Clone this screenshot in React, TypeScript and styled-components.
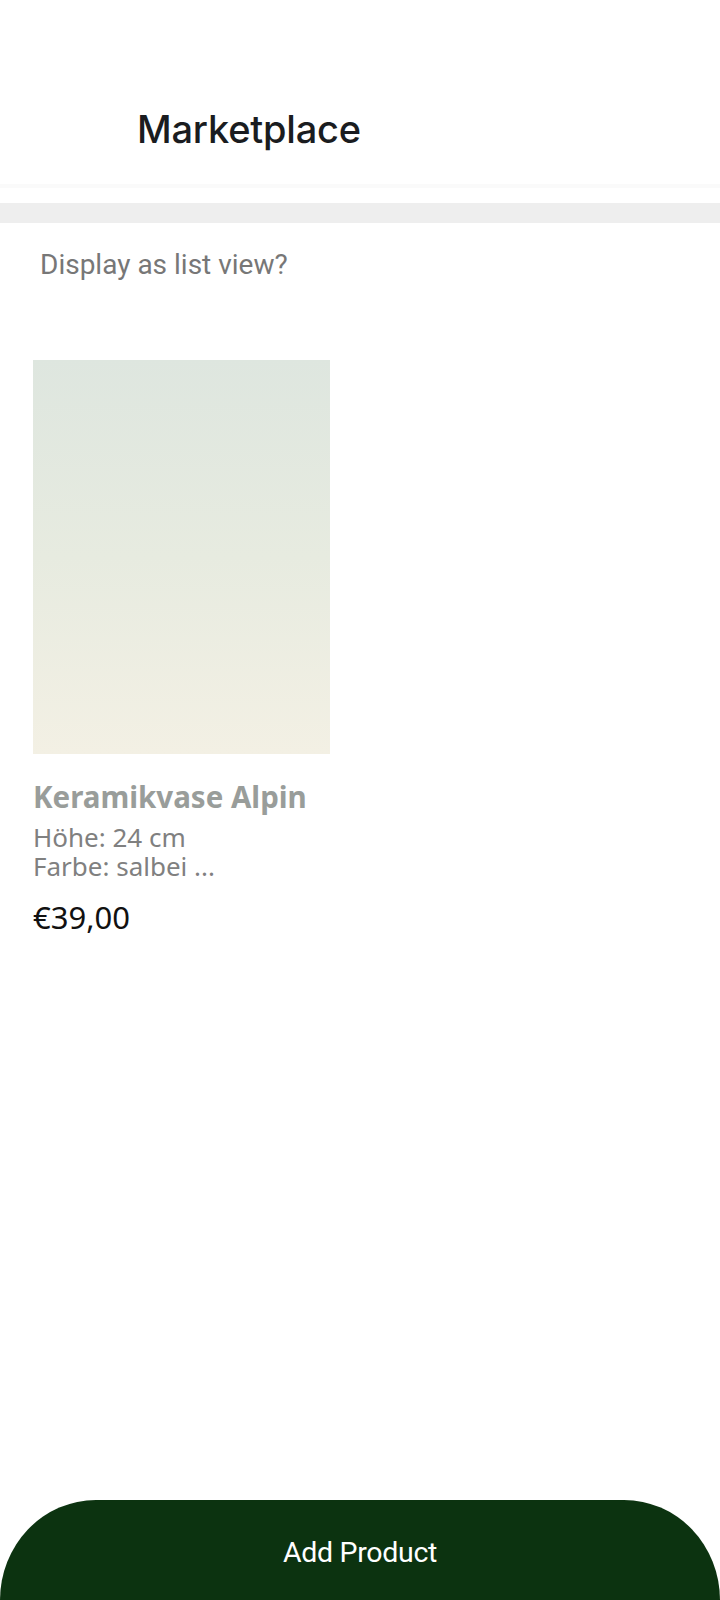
import React from "react";
import styled, { createGlobalStyle } from "styled-components";

const GlobalStyle = createGlobalStyle`
  html, body { margin: 0; padding: 0; background: #ffffff; }
  body { font-family: "Inter", "Roboto", sans-serif; }
  * { box-sizing: border-box; }
`;

const Page = styled.div`
  width: 720px;
  min-height: 1600px;
  display: flex;
  flex-direction: column;
  background: #ffffff;
  overflow: hidden;
`;

const Header = styled.header`
  height: 184px;
  display: flex;
  align-items: flex-start;
  padding: 105px 0 0 137px;
  background: #ffffff;
`;

const Title = styled.h1`
  margin: 0;
  font-family: "Inter", sans-serif;
  font-weight: 500;
  font-size: 38px;
  line-height: 48px;
  color: #1a1c20;
  letter-spacing: -0.2px;
`;

const HeaderEdge = styled.div`
  height: 4px;
  background: #fafafa;
  margin-bottom: 15px;
`;

const Divider = styled.div`
  height: 20px;
  background: #eeeeee;
`;

const ToggleLabel = styled.div`
  padding: 25px 0 0 40px;
  font-family: "Roboto", sans-serif;
  font-size: 28px;
  line-height: 34px;
  color: #777777;
  height: 137px;
`;

const Grid = styled.div`
  display: grid;
  grid-template-columns: 297px;
  padding: 0 0 0 33px;
`;

const Card = styled.div`
  display: flex;
  flex-direction: column;
`;

const Thumb = styled.div`
  width: 297px;
  height: 394px;
  background: linear-gradient(180deg, #dee6df 0%, #e7ebe0 50%, #f3f0e4 100%);
`;

const ProductName = styled.div`
  margin-top: 25px;
  font-family: "Noto Sans", "Open Sans", sans-serif;
  font-weight: 700;
  font-size: 29.5px;
  line-height: 36px;
  color: #999d9a;
`;

const ProductDesc = styled.div`
  margin-top: 8px;
  display: flex;
  flex-direction: column;
`;

const DescLine = styled.span`
  font-family: "Noto Sans", "Open Sans", sans-serif;
  font-size: 26px;
  line-height: 29px;
  height: 29px;
  color: #808080;
  white-space: nowrap;
`;

const Price = styled.div`
  margin-top: 16px;
  font-family: "Noto Sans", "Open Sans", sans-serif;
  font-size: 31px;
  line-height: 40px;
  color: #111111;
`;

const Spacer = styled.div`
  flex: 1;
`;

const AddButton = styled.button`
  height: 100px;
  width: 100%;
  border: none;
  margin: 0;
  padding: 4px 0 0;
  background: #0c3310;
  color: #ffffff;
  border-radius: 96px 96px 0 0 / 100px 100px 0 0;
  font-family: "Roboto", sans-serif;
  font-size: 28.5px;
  letter-spacing: -0.3px;
  display: flex;
  align-items: center;
  justify-content: center;
`;

export default function App() {
  return (
    <>
      <GlobalStyle />
      <Page>
        <Header>
          <Title>Marketplace</Title>
        </Header>
        <HeaderEdge />
        <Divider />
        <ToggleLabel>Display as list view?</ToggleLabel>
        <Grid>
          <Card>
            <Thumb />
            <ProductName>Keramikvase Alpin</ProductName>
            <ProductDesc>
              <DescLine>Höhe: 24 cm</DescLine>
              <DescLine>Farbe: salbei ...</DescLine>
            </ProductDesc>
            <Price>€39,00</Price>
          </Card>
        </Grid>
        <Spacer />
        <AddButton>Add Product</AddButton>
      </Page>
    </>
  );
}
